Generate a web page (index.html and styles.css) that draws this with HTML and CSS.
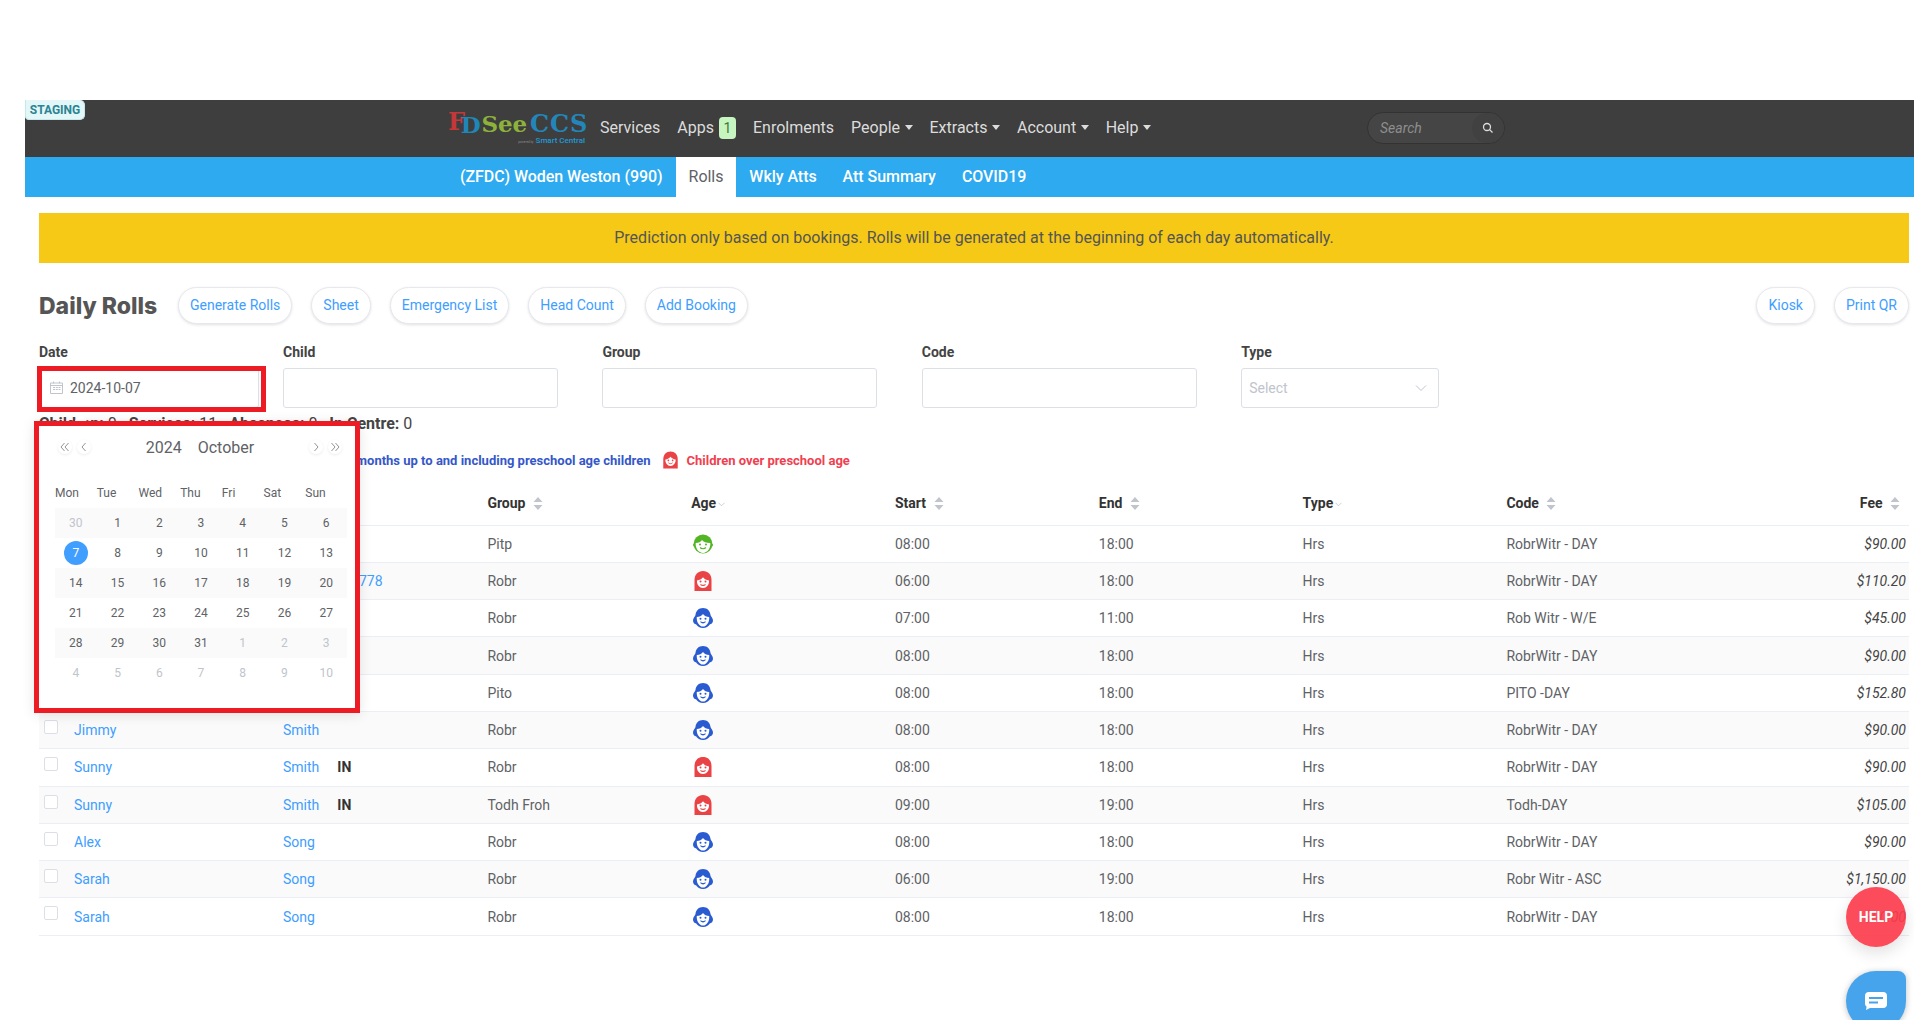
FILE: index.html
```html
<!DOCTYPE html>
<html lang="en">
<head>
<meta charset="utf-8">
<title>Daily Rolls</title>
<link rel="stylesheet" href="styles.css">
</head>
<body>
<svg class="defs" width="0" height="0" aria-hidden="true">
  <symbol id="face-green" viewBox="0 0 20 20">
    <circle cx="10" cy="10" r="9.400" fill="#52b524"/>
    <circle cx="1.500" cy="11" r="1.500" fill="#52b524"/><circle cx="18.500" cy="11" r="1.500" fill="#52b524"/>
    <path d="M2.700 9c3-.1 5.100-1 6.300-3 1.400 2 4.200 2.900 8.300 3 .5 5.200-3.100 9.900-7.300 9.900S2.200 14.200 2.700 9z" fill="#fff"/>
    <circle cx="7" cy="10.500" r="1" fill="#52b524"/><circle cx="13" cy="10.500" r="1" fill="#52b524"/>
    <path d="M7 13.500c1.600 1.600 4.400 1.600 6 0" fill="none" stroke="#52b524" stroke-width="1.100"/>
  </symbol>
  <symbol id="face-red" viewBox="0 0 20 20">
    <path d="M1.500 9C1.500 3.500 5 0 10 0s8.500 3.500 8.500 9v11h-17z" fill="#ea4345"/>
    <path d="M4 9.500c2.500-.3 4.600-1.300 6-3.200 1.400 1.900 3.500 2.900 6 3.200.4 4.200-2.500 7.500-6 7.500s-6.400-3.300-6-7.500z" fill="#fff"/>
    <circle cx="7.500" cy="10.500" r="1" fill="#ea4345"/><circle cx="12.500" cy="10.500" r="1" fill="#ea4345"/>
    <path d="M7.500 13.300c1.400 1.400 3.600 1.400 5 0" fill="none" stroke="#ea4345" stroke-width="1.100"/>
  </symbol>
  <symbol id="face-blue" viewBox="0 0 20 20">
    <path d="M10 0c4.200 0 7.200 2.800 7.500 7 .1 1.400 2.500 2.800 2.500 5.500 0 2.400-1.600 3.500-3 3.800C15.500 18.700 13 20 10 20s-5.500-1.300-7-3.700c-1.400-.3-3-1.400-3-3.800C0 9.800 2.400 8.400 2.500 7 2.800 2.800 5.800 0 10 0z" fill="#2a5bd0"/>
    <path d="M3.800 9c2.600-.2 4.800-1.100 6.200-3 1.400 1.900 3.600 2.800 6.200 3 .6 4.800-2.500 9.600-6.200 9.600S3.200 13.800 3.800 9z" fill="#fff"/>
    <circle cx="7.500" cy="10.800" r="1" fill="#2a5bd0"/><circle cx="12.500" cy="10.800" r="1" fill="#2a5bd0"/>
    <path d="M7.500 13.600c1.400 1.400 3.600 1.400 5 0" fill="none" stroke="#2a5bd0" stroke-width="1.100"/>
  </symbol>
  <symbol id="sort" viewBox="0 0 10 13">
    <path d="M5 0l4.500 5h-9zM5 13L.5 8h9z" fill="#c0c4cc"/>
  </symbol>
  <symbol id="chev-down" viewBox="0 0 8 5">
    <path d="M.5.500L4 4 7.500.5" fill="none" stroke="#b6bac2" stroke-width=".8"/>
  </symbol>
</svg>

<div class="shell">
  <header class="topnav">
    <span class="staging">STAGING</span>
    <div class="logo">
      <div class="logo-mark"><span class="l-f">F</span><span class="l-d">D</span><span class="l-see">See</span><span class="l-ccs">CCS</span></div>
      <div class="logo-sub"><span class="l-pow">powered by</span> <span class="l-sc">Smart Central</span></div>
    </div>
    <nav class="mainlinks">
      <a>Services</a>
      <a class="apps">Apps <span class="badge">1</span></a>
      <a>Enrolments</a>
      <a class="drop">People</a>
      <a class="drop">Extracts</a>
      <a class="drop">Account</a>
      <a class="drop">Help</a>
    </nav>
    <div class="searchbox">
      <span class="search-ph">Search</span>
      <span class="search-btn">
        <svg width="12" height="12" viewBox="0 0 12 12"><circle cx="5" cy="5" r="3.500" fill="none" stroke="#ddd" stroke-width="1.300"/><path d="M7.600 7.600L10.500 10.500" stroke="#ddd" stroke-width="1.300"/></svg>
      </span>
    </div>
  </header>
  <nav class="subnav">
    <a>(ZFDC) Woden Weston (990)</a>
    <a class="active">Rolls</a>
    <a>Wkly Atts</a>
    <a>Att Summary</a>
    <a>COVID19</a>
  </nav>

  <main class="content">
    <div class="banner">Prediction only based on bookings. Rolls will be generated at the beginning of each day automatically.</div>

    <div class="titlerow">
      <h1>Daily Rolls</h1>
      <a class="pill">Generate Rolls</a>
      <a class="pill">Sheet</a>
      <a class="pill">Emergency List</a>
      <a class="pill">Head Count</a>
      <a class="pill">Add Booking</a>
      <span class="spacer"></span>
      <a class="pill">Kiosk</a>
      <a class="pill">Print QR</a>
    </div>

    <div class="filters">
      <div class="field f-date">
        <label>Date</label>
        <div class="input">
          <svg class="cal-ico" width="13" height="13" viewBox="0 0 13 13"><path d="M.5 2h12v10.500H.5zM.5 4.500h12M3.500.5v2M9.500.5v2" fill="none" stroke="#c0c4cc"/><path d="M3 6.500h2M5.800 6.500h2M8.500 6.500h2M3 8.500h2M5.800 8.500h2M8.500 8.500h2" stroke="#c0c4cc"/></svg>
          2024-10-07
        </div>
        <span class="redbox"></span>
      </div>
      <div class="field f-wide"><label>Child</label><div class="input"></div></div>
      <div class="field f-wide"><label>Group</label><div class="input"></div></div>
      <div class="field f-wide"><label>Code</label><div class="input"></div></div>
      <div class="field f-type">
        <label>Type</label>
        <div class="input select"><span>Select</span>
          <svg width="12" height="8" viewBox="0 0 12 8"><path d="M1 1.500l5 5 5-5" fill="none" stroke="#c0c4cc"/></svg>
        </div>
      </div>
    </div>

    <div class="stats">
      <b>Children:</b> 0 <b class="st">Services:</b> 11 <b class="st">Absences:</b> 0 <b class="st">In Centre:</b> 0
    </div>

    <div class="legend">
      <svg class="lg-ico"><use href="#face-green"/></svg><span class="lg-green">Children under 24 months</span>
      <svg class="lg-ico"><use href="#face-blue"/></svg><span class="lg-blue">Children 24 months up to and including preschool age children</span>
      <svg class="lg-ico"><use href="#face-red"/></svg><span class="lg-red">Children over preschool age</span>
    </div>

    <table class="rolls">
      <colgroup><col class="c-sel"><col class="c-first"><col class="c-last"><col><col><col><col><col><col></colgroup>
      <thead>
        <tr>
          <th></th><th></th><th></th>
          <th>Group <svg class="so"><use href="#sort"/></svg></th>
          <th>Age<svg class="ch"><use href="#chev-down"/></svg></th>
          <th>Start <svg class="so"><use href="#sort"/></svg></th>
          <th>End <svg class="so"><use href="#sort"/></svg></th>
          <th>Type<svg class="ch"><use href="#chev-down"/></svg></th>
          <th>Code <svg class="so"><use href="#sort"/></svg></th>
          <th class="fee">Fee <svg class="so"><use href="#sort"/></svg></th>
        </tr>
      </thead>
      <tbody>
        <tr><td class="sel"><i class="cb"></i></td><td></td><td></td><td>Pitp</td><td><svg class="face"><use href="#face-green"/></svg></td><td>08:00</td><td>18:00</td><td>Hrs</td><td>RobrWitr - DAY</td><td class="fee">$90.00</td></tr>
        <tr><td class="sel"><i class="cb"></i></td><td></td><td><a class="pad778">778</a></td><td>Robr</td><td><svg class="face"><use href="#face-red"/></svg></td><td>06:00</td><td>18:00</td><td>Hrs</td><td>RobrWitr - DAY</td><td class="fee">$110.20</td></tr>
        <tr><td class="sel"><i class="cb"></i></td><td></td><td></td><td>Robr</td><td><svg class="face"><use href="#face-blue"/></svg></td><td>07:00</td><td>11:00</td><td>Hrs</td><td>Rob Witr - W/E</td><td class="fee">$45.00</td></tr>
        <tr><td class="sel"><i class="cb"></i></td><td></td><td></td><td>Robr</td><td><svg class="face"><use href="#face-blue"/></svg></td><td>08:00</td><td>18:00</td><td>Hrs</td><td>RobrWitr - DAY</td><td class="fee">$90.00</td></tr>
        <tr><td class="sel"><i class="cb"></i></td><td></td><td></td><td>Pito</td><td><svg class="face"><use href="#face-blue"/></svg></td><td>08:00</td><td>18:00</td><td>Hrs</td><td>PITO -DAY</td><td class="fee">$152.80</td></tr>
        <tr><td class="sel"><i class="cb"></i></td><td><a>Jimmy</a></td><td><a>Smith</a></td><td>Robr</td><td><svg class="face"><use href="#face-blue"/></svg></td><td>08:00</td><td>18:00</td><td>Hrs</td><td>RobrWitr - DAY</td><td class="fee">$90.00</td></tr>
        <tr><td class="sel"><i class="cb"></i></td><td><a>Sunny</a></td><td><a>Smith</a><b class="in">IN</b></td><td>Robr</td><td><svg class="face"><use href="#face-red"/></svg></td><td>08:00</td><td>18:00</td><td>Hrs</td><td>RobrWitr - DAY</td><td class="fee">$90.00</td></tr>
        <tr><td class="sel"><i class="cb"></i></td><td><a>Sunny</a></td><td><a>Smith</a><b class="in">IN</b></td><td>Todh Froh</td><td><svg class="face"><use href="#face-red"/></svg></td><td>09:00</td><td>19:00</td><td>Hrs</td><td>Todh-DAY</td><td class="fee">$105.00</td></tr>
        <tr><td class="sel"><i class="cb"></i></td><td><a>Alex</a></td><td><a>Song</a></td><td>Robr</td><td><svg class="face"><use href="#face-blue"/></svg></td><td>08:00</td><td>18:00</td><td>Hrs</td><td>RobrWitr - DAY</td><td class="fee">$90.00</td></tr>
        <tr><td class="sel"><i class="cb"></i></td><td><a>Sarah</a></td><td><a>Song</a></td><td>Robr</td><td><svg class="face"><use href="#face-blue"/></svg></td><td>06:00</td><td>19:00</td><td>Hrs</td><td>Robr Witr - ASC</td><td class="fee">$1,150.00</td></tr>
        <tr><td class="sel"><i class="cb"></i></td><td><a>Sarah</a></td><td><a>Song</a></td><td>Robr</td><td><svg class="face"><use href="#face-blue"/></svg></td><td>08:00</td><td>18:00</td><td>Hrs</td><td>RobrWitr - DAY</td><td class="fee">$90.00</td></tr>
      </tbody>
    </table>
  </main>
</div>

<section class="calendar">
  <div class="cal-head">
    <div class="cal-arrows">
      <span class="arrow"><svg width="10" height="10" viewBox="0 0 10 10"><path d="M4.500 1L1 5l3.500 4M8.500 1L5 5l3.500 4" fill="none" stroke="#888" stroke-width=".9"/></svg></span>
      <span class="arrow"><svg width="10" height="10" viewBox="0 0 10 10"><path d="M6.500 1L3 5l3.500 4" fill="none" stroke="#888" stroke-width=".9"/></svg></span>
    </div>
    <div class="cal-title"><span>2024</span><span>October</span></div>
    <div class="cal-arrows">
      <span class="arrow"><svg width="10" height="10" viewBox="0 0 10 10"><path d="M3.500 1L7 5 3.500 9" fill="none" stroke="#888" stroke-width=".9"/></svg></span>
      <span class="arrow"><svg width="10" height="10" viewBox="0 0 10 10"><path d="M1.500 1L5 5 1.500 9M5.500 1L9 5 5.500 9" fill="none" stroke="#888" stroke-width=".9"/></svg></span>
    </div>
  </div>
  <div class="cal-week"><span>Mon</span><span>Tue</span><span>Wed</span><span>Thu</span><span>Fri</span><span>Sat</span><span>Sun</span></div>
  <div class="cal-row"><span class="off">30</span><span>1</span><span>2</span><span>3</span><span>4</span><span>5</span><span>6</span></div>
  <div class="cal-row"><span><em class="today">7</em></span><span>8</span><span>9</span><span>10</span><span>11</span><span>12</span><span>13</span></div>
  <div class="cal-row"><span>14</span><span>15</span><span>16</span><span>17</span><span>18</span><span>19</span><span>20</span></div>
  <div class="cal-row"><span>21</span><span>22</span><span>23</span><span>24</span><span>25</span><span>26</span><span>27</span></div>
  <div class="cal-row"><span>28</span><span>29</span><span>30</span><span>31</span><span class="off">1</span><span class="off">2</span><span class="off">3</span></div>
  <div class="cal-row"><span class="off">4</span><span class="off">5</span><span class="off">6</span><span class="off">7</span><span class="off">8</span><span class="off">9</span><span class="off">10</span></div>
</section>

<a class="help">HELP</a>
<a class="chat">
  <svg width="24" height="20" viewBox="0 0 24 20"><path d="M5 1h14a4 4 0 0 1 4 4v8a4 4 0 0 1-4 4H6l-4 2 .6-3.200A4 4 0 0 1 1 13V5a4 4 0 0 1 4-4z" fill="#fff"/><path d="M5 7h14M5 11.500h9" stroke="#46a4ec" stroke-width="2"/></svg>
</a>
</body>
</html>
```

FILE: styles.css
```css
* { box-sizing: border-box; }
html, body { margin: 0; height: 100%; overflow: hidden; background: #fff; }
body { font-family: Roboto, "Liberation Sans", sans-serif; font-size: 14px; color: #606266; position: relative; }
.defs { position: absolute; }
a { text-decoration: none; }

.shell { margin: 100px 0 0 25px; }

.topnav { position: relative; height: 57px; background: #3e3e3e; display: flex; align-items: center; padding-left: 423px; }
.staging { position: absolute; left: 0; top: 0; width: 60px; height: 20px; background: #e3f6f8; border: 1px solid #c6e8ec; border-top: 0; border-radius: 0 5px 5px 4px; color: #2a8492; font-size: 12px; font-weight: 700; line-height: 20px; text-align: center; }
.logo { width: 137px; height: 32px; margin-top: -2px; }
.logo-mark { font-family: "DejaVu Serif", serif; font-weight: 700; font-size: 23px; line-height: 24px; height: 24px; letter-spacing: -.2px; white-space: nowrap; }
.l-f { color: #c5383a; font-size: 24px; position: relative; top: -2px; }
.l-d { color: #1f86b8; margin-left: -4px; position: relative; top: 1px; }
.l-see { color: #8db23c; margin-left: 1px; }
.l-ccs { color: #2386bb; margin-left: 3px; font-size: 24px; letter-spacing: 1px; }
.logo-sub { text-align: right; font-size: 8px; line-height: 9px; white-space: nowrap; }
.l-pow { font-size: 3px; color: #888; }
.l-sc { color: #1f9ad6; font-weight: 500; }

.mainlinks { display: flex; align-items: center; gap: 17px; margin: -2px 0 0 15px; }
.mainlinks a { color: #dcdcdc; font-size: 16px; display: flex; align-items: center; line-height: 20px; white-space: nowrap; }
.apps { gap: 5px; }
.badge { width: 17px; height: 22px; background: #c6f5bf; color: #3d7a3d; border-radius: 4px; font-size: 14px; line-height: 22px; text-align: center; }
.drop::after { content: ""; margin-left: 4.500px; border-left: 4px solid transparent; border-right: 4px solid transparent; border-top: 5px solid #dcdcdc; }

.searchbox { position: absolute; left: 1342px; top: 12px; width: 138px; height: 32px; border-radius: 16px; background: #454545; border: 1px solid #333; display: flex; align-items: center; justify-content: space-between; padding-left: 12px; }
.search-ph { color: #8e8e8e; font-size: 14px; font-style: italic; }
.search-btn { width: 32px; height: 30px; border-radius: 15px; background: #414141; display: flex; align-items: center; justify-content: center; }

.subnav { height: 40px; background: #2daaf0; display: flex; padding-left: 422px; }
.subnav a { color: #fff; font-size: 16px; font-weight: 500; line-height: 40px; padding: 0 13px; letter-spacing: -.05px; white-space: nowrap; }
.subnav a.active { background: #fff; color: #606266; font-weight: 400; }

.content { padding: 16px 5px 0 14px; }
.banner { height: 50px; background: #f6c916; color: #555; font-size: 16px; line-height: 50px; text-align: center; }

.titlerow { display: flex; align-items: center; gap: 19px; margin-top: 24px; height: 37px; }
.titlerow h1 { margin: 0; font-family: Inter, sans-serif; font-size: 23px; font-weight: 800; color: #555; width: 120px; white-space: nowrap; }
.spacer { flex: 1; }
.pill { height: 37px; line-height: 35px; padding: 0 11px; border: 1px solid #e6e8ee; border-radius: 19px; color: #409eff; font-size: 14px; background: #fff; box-shadow: 0 1px 3px rgba(0,0,0,.12); white-space: nowrap; }

.filters { display: flex; margin-top: 18px; }
.field { position: relative; }
.field label { display: block; font-weight: 700; font-size: 14px; line-height: 20px; color: #444; margin-bottom: 6px; }
.f-date { width: 244px; }
.f-date .input { width: 220px; }
.f-wide { width: 275px; margin-right: 44.400px; }
.f-type { width: 198px; }
.input { height: 40px; border: 1px solid #dcdfe6; border-radius: 3px; background: #fff; display: flex; align-items: center; padding: 0 0 1px 10px; gap: 7px; color: #606266; font-size: 14px; }
.select { justify-content: space-between; padding: 0 11px 1px 7px; color: #c0c4cc; }
.redbox { position: absolute; left: -2px; top: 24px; width: 229px; height: 46px; border: 5px solid #ed1c24; }

.stats { margin-top: 4px; line-height: 24px; font-size: 16px; color: #444; white-space: nowrap; }
.stats b { font-weight: 700; }
.stats .st { margin-left: 8px; }

.legend { margin-top: 14px; height: 20px; display: flex; align-items: center; font-size: 13px; font-weight: 700; white-space: nowrap; }
.lg-ico { width: 17px; height: 20px; margin-right: 8px; flex: none; }
.lg-green { color: #52b524; margin-right: 45px; }
.lg-blue { color: #3557c9; margin-right: 11px; }
.lg-red { color: #f0404f; }

.rolls { width: 1870px; table-layout: fixed; border-collapse: collapse; margin-top: 11px; }
.c-sel { width: 30px; }
.c-first { width: 209px; }
.c-last { width: 204.400px; }
.rolls th { height: 44px; padding: 0 5px; text-align: left; color: #333; font-size: 14px; font-weight: 700; border-bottom: 1px solid #ebeef5; white-space: nowrap; }
.rolls td { height: 37.300px; padding: 0 5px; color: #606266; border-bottom: 1px solid #ebeef5; white-space: nowrap; }
.rolls tbody tr:nth-child(even) td { background: #fafafa; }
.rolls td a { color: #409eff; }
.rolls td.sel { vertical-align: top; padding-top: 8px; }
.rolls .fee { text-align: right; padding-right: 3px; }
.rolls td.fee { font-style: italic; color: #444; }
.rolls th.fee { padding-right: 9px; }
.cb { display: block; width: 14px; height: 14px; border: 1px solid #dcdfe6; border-radius: 2px; background: #fff; }
.in { margin-left: 18px; color: #333; }
.pad778 { display: inline-block; padding-left: 76px; }
.so { width: 10px; height: 13px; vertical-align: -2px; margin-left: 4px; }
.ch { width: 7px; height: 5px; vertical-align: 1px; margin-left: 2px; }
.face { display: block; width: 20px; height: 20px; margin-left: 2px; }

.calendar { position: absolute; left: 34px; top: 421px; width: 326px; height: 292px; border: 5px solid #ed1c24; background: #fff; padding-right: 8px; box-shadow: 0 2px 12px rgba(0,0,0,.1); }
.calendar::before { content: ""; position: absolute; left: 36px; top: -11px; border-left: 6px solid transparent; border-right: 6px solid transparent; border-bottom: 6px solid #fff; }
.cal-head { height: 42px; display: flex; align-items: center; justify-content: space-between; padding: 0 5px 0 19px; }
.cal-arrows { display: flex; gap: 5px; }
.arrow { width: 14px; height: 14px; border-radius: 50%; background: #fff; box-shadow: 0 1px 3px rgba(0,0,0,.08); display: flex; align-items: center; justify-content: center; }
.cal-title { display: flex; gap: 16px; font-size: 16px; color: #606266; }
.cal-week, .cal-row { display: grid; grid-template-columns: repeat(7, 1fr); margin-left: 16px; height: 30px; align-items: center; font-size: 12px; color: #606266; }
.cal-week { margin-top: 10px; }
.cal-row { text-align: center; }
.cal-row:nth-child(odd) { background: #fafafa; }
.off { color: #c0c4cc; }
.today { display: block; width: 24px; height: 24px; margin: 0 auto; border-radius: 50%; background: #409eff; color: #fff; font-style: normal; line-height: 24px; }

.help { position: absolute; left: 1846px; top: 887px; width: 60px; height: 60px; border-radius: 50%; background: rgba(252, 60, 76, .92); color: #fff; font-weight: 700; font-size: 14px; line-height: 60px; text-align: center; box-shadow: 0 6px 16px rgba(0,0,0,.12); }
.chat { position: absolute; left: 1846px; top: 971px; width: 60px; height: 60px; border-radius: 50% 8px 50% 50%; background: #46a4ec; box-shadow: 0 1px 6px rgba(0,0,0,.25); display: flex; align-items: center; justify-content: center; }
```
